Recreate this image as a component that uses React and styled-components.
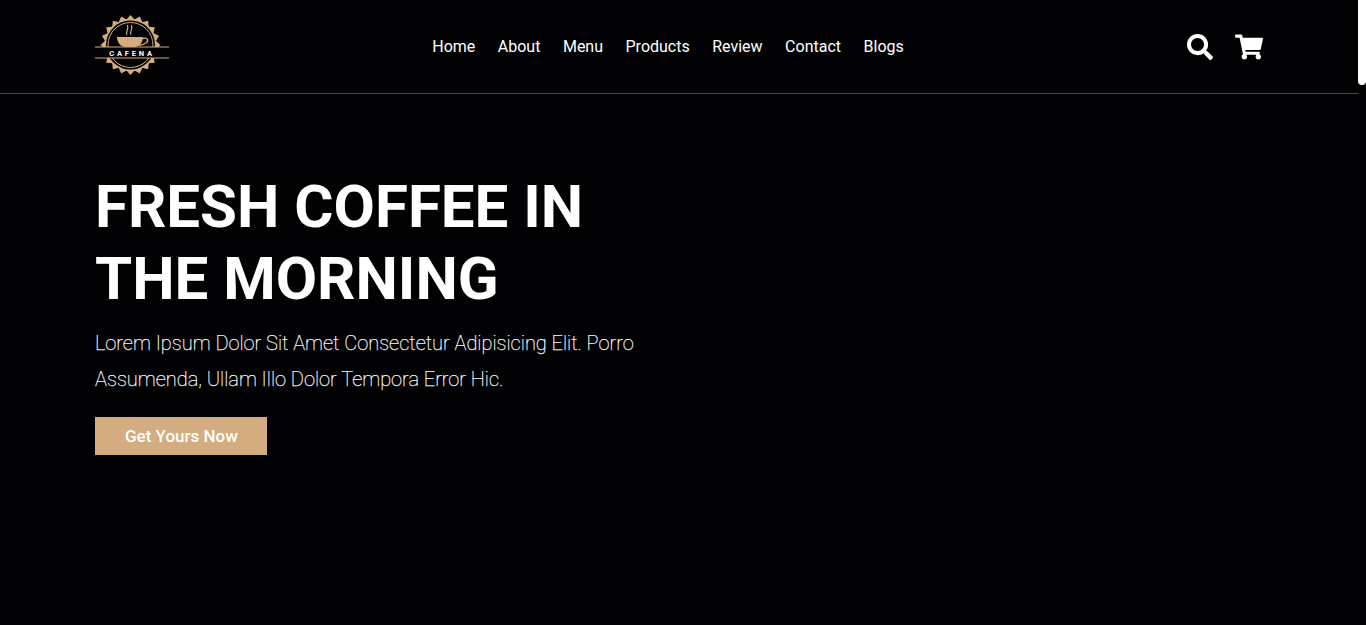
import React from 'react';
import styled, { createGlobalStyle } from 'styled-components';
import { FaSearch, FaShoppingCart } from 'react-icons/fa';

const GOLD = '#d3ad7f';

const GlobalStyle = createGlobalStyle`
  html, body {
    margin: 0;
    padding: 0;
    background: #010103;
    overflow: hidden;
  }
  * {
    box-sizing: border-box;
  }
`;

const Page = styled.div`
  width: 1366px;
  height: 625px;
  padding-right: 8px;
  background: #010103;
  color: #fff;
  font-family: Roboto, "Liberation Sans", sans-serif;
`;

const Header = styled.header`
  display: flex;
  align-items: center;
  justify-content: space-between;
  height: 94px;
  padding: 0 95px;
  border-bottom: 1px solid #4a4a4a;
`;

const LogoLink = styled.a`
  display: block;
  width: 74px;
  height: 62px;
  margin-top: -4px;
`;

const Nav = styled.nav`
  display: flex;
  gap: 22.5px;
  margin-left: -20px;
`;

const NavLink = styled.a`
  color: #fff;
  font-size: 16px;
  line-height: 20px;
`;

const Icons = styled.div`
  display: flex;
  align-items: center;
  gap: 22px;
  height: 28px;

  svg {
    display: block;
  }
`;

const Hero = styled.section`
  padding: 77px 95px 0;
`;

const Title = styled.h1`
  margin: 0;
  width: 600px;
  font-size: 60px;
  line-height: 72px;
  font-weight: 700;
`;

const Text = styled.p`
  margin: 10px 0 0;
  width: 560px;
  font-size: 20px;
  line-height: 36px;
  font-weight: 135;
  -webkit-text-stroke: 0.25px #fff;
`;

const Button = styled.a`
  display: inline-block;
  margin-top: 20px;
  padding: 0 29.5px 0 30px;
  height: 38px;
  line-height: 38px;
  background: ${GOLD};
  color: #fff;
  font-size: 17px;
  font-weight: 500;
`;

const ScrollThumb = styled.div`
  position: fixed;
  top: -6px;
  right: 0;
  width: 8px;
  height: 91px;
  background: #fff;
  border-radius: 4px;
`;

const teeth = Array.from({ length: 20 }, (_, i) => i * 18);

const Logo = () => (
  <svg viewBox="0 0 74 62" width="74" height="62">
    {teeth.map((a) => (
      <polygon key={a} points="31,6 35.5,1 40,6" fill={GOLD} transform={`rotate(${a} 35.5 31)`} />
    ))}
    <circle cx="35.5" cy="31" r="26" fill={GOLD} />
    <circle cx="35.5" cy="31" r="24.5" fill="#010103" />
    <circle cx="35.5" cy="31" r="22.5" fill="none" stroke={GOLD} strokeWidth="1" />
    <path d="M22 23 H48 C48 29 44 33 39 33 H31 C26 33 22 29 22 23 Z" fill={GOLD} />
    <path d="M47.5 24.5 C53 23 54 27 51 29 C49.5 30 46 31 44 31.5" fill="none" stroke={GOLD} strokeWidth="1.4" />
    <path d="M32 21 C30 18 34 16 32.5 11 M36 21 C34 18 38 16 36.5 11" fill="none" stroke={GOLD} strokeWidth="1.2" />
    <rect x="0" y="33" width="74" height="11" fill="#010103" />
    <rect x="0" y="32.5" width="74" height="1" fill={GOLD} />
    <rect x="0" y="43.5" width="74" height="1" fill={GOLD} />
    <text x="37" y="41.5" textAnchor="middle" fill="#fff" fontSize="7.5" fontWeight="700" letterSpacing="2.8" fontFamily="Roboto, sans-serif">CAFENA</text>
  </svg>
);

const links = ['Home', 'About', 'Menu', 'Products', 'Review', 'Contact', 'Blogs'];

const App = () => (
  <Page>
    <GlobalStyle />
    <Header>
      <LogoLink>
        <Logo />
      </LogoLink>
      <Nav>
        {links.map((l) => (
          <NavLink key={l}>{l}</NavLink>
        ))}
      </Nav>
      <Icons>
        <FaSearch size={26} />
        <FaShoppingCart size={28} />
      </Icons>
    </Header>
    <Hero>
      <Title>FRESH COFFEE IN THE MORNING</Title>
      <Text>Lorem Ipsum Dolor Sit Amet Consectetur Adipisicing Elit. Porro Assumenda, Ullam Illo Dolor Tempora Error Hic.</Text>
      <Button>Get Yours Now</Button>
    </Hero>
    <ScrollThumb />
  </Page>
);

export default App;
